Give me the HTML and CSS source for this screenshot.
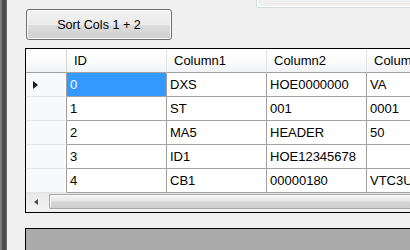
FILE: index.html
```html
<!DOCTYPE html>
<html lang="en">
<head>
  <meta charset="UTF-8">
  <title>Sort Cols</title>
  <link rel="stylesheet" href="styles.css">
</head>
<body>
  <div class="edge"></div>
  <div class="main">
    <div class="topbar">
      <div class="topbox"></div>
    </div>

    <button class="sort-btn">Sort Cols 1 + 2</button>

    <div class="grid">
      <div class="cells">
        <div class="hdr corner"></div>
        <div class="hdr">ID</div>
        <div class="hdr">Column1</div>
        <div class="hdr">Column2</div>
        <div class="hdr">Column3</div>

        <div class="rowhdr"><span class="cur"></span></div>
        <div class="cell sel">0</div>
        <div class="cell">DXS</div>
        <div class="cell">HOE0000000</div>
        <div class="cell">VA</div>

        <div class="rowhdr"></div>
        <div class="cell">1</div>
        <div class="cell">ST</div>
        <div class="cell">001</div>
        <div class="cell">0001</div>

        <div class="rowhdr"></div>
        <div class="cell">2</div>
        <div class="cell">MA5</div>
        <div class="cell">HEADER</div>
        <div class="cell">50</div>

        <div class="rowhdr"></div>
        <div class="cell">3</div>
        <div class="cell">ID1</div>
        <div class="cell">HOE12345678</div>
        <div class="cell"></div>

        <div class="rowhdr"></div>
        <div class="cell">4</div>
        <div class="cell">CB1</div>
        <div class="cell">00000180</div>
        <div class="cell">VTC3U</div>
      </div>

      <div class="hscroll">
        <div class="arrow-btn"><span class="arrow-left"></span></div>
        <div class="thumb"></div>
      </div>
    </div>

    <div class="panel"></div>
  </div>
</body>
</html>
```

FILE: styles.css
```css
* {
  margin: 0;
  padding: 0;
  box-sizing: border-box;
}

body {
  width: 410px;
  height: 250px;
  overflow: hidden;
  background-color: #f0f0f0;
  font-family: "Liberation Sans", Arial, sans-serif;
  display: flex;
}

/* dark frame on the left */
.edge {
  width: 7px;
  flex-shrink: 0;
  background: linear-gradient(to right, #7c7c7c 0 2px, #4c4c4c 2px 6px, #6a6a6a 6px 7px);
}

.main {
  flex: 1;
  padding-left: 18px;
  min-width: 0;
  overflow: hidden;
}

.topbar {
  height: 8px;
}

.topbox {
  margin-left: 231px;
  height: 8px;
  border-left: 1px solid #d3dbe3;
  border-bottom: 1px solid #d3dbe3;
  border-bottom-left-radius: 2px;
  box-shadow: inset 1px -1px 0 #ffffff;
}

.sort-btn {
  display: block;
  margin: 1px 0 0 1px;
  width: 146px;
  height: 31px;
  border: 1px solid #707070;
  border-radius: 3px;
  background: linear-gradient(#f2f2f2, #ebebeb 50%, #dddddd 51%, #cfcfcf);
  box-shadow: inset 0 0 0 1px #fbfbfb;
  font-family: "Liberation Sans", Arial, sans-serif;
  font-size: 12.6px;
  color: #000;
}

.grid {
  margin-top: 8px;
  border-top: 1px solid #000;
  border-left: 1px solid #000;
  border-bottom: 1px solid #000;
  padding-bottom: 2px;
  overflow: hidden;
}

.cells {
  display: grid;
  grid-template-columns: 41px repeat(3, 100px) 44px;
  grid-auto-rows: 24px;
  font-size: 13px;
}

.hdr {
  background: linear-gradient(#ffffff, #fbfbfc 55%, #f1f2f4);
  border-right: 1px solid #e2e3e6;
  border-bottom: 1px solid #a0a0a0;
  padding-left: 7px;
  display: flex;
  align-items: center;
  white-space: nowrap;
  overflow: hidden;
  color: #000;
}

.hdr.corner {
  border-right: 1px solid #d5d5d5;
}

.rowhdr {
  background-color: #f8f9fa;
  border-right: 1px solid #a0a0a0;
  border-bottom: 1px solid #e4e4e4;
  box-shadow: inset -2px 0 0 #ffffff;
  padding-left: 7px;
  display: flex;
  align-items: center;
}

.cur {
  width: 0;
  height: 0;
  border-left: 5px solid #1a1a1a;
  border-top: 4.5px solid transparent;
  border-bottom: 4.5px solid transparent;
}

.cell {
  background-color: #fff;
  border-right: 1px solid #a0a0a0;
  border-bottom: 1px solid #a0a0a0;
  padding-left: 3px;
  display: flex;
  align-items: center;
  white-space: nowrap;
  overflow: hidden;
  color: #000;
}

.cells > :nth-child(5n) {
  border-right: none;
}

.cell.sel {
  background-color: #3399ff;
  color: #fff;
}

.hscroll {
  display: flex;
  height: 17px;
  background: linear-gradient(#e9e9e9, #f2f2f2);
}

.arrow-btn {
  width: 23px;
  display: flex;
  align-items: center;
  padding-left: 8px;
}

.arrow-left {
  width: 0;
  height: 0;
  border-right: 4px solid #4d4d4d;
  border-top: 3.5px solid transparent;
  border-bottom: 3.5px solid transparent;
}

.thumb {
  flex: 1;
  margin: 1px 0;
  border: 1px solid #a7a7a7;
  border-right: none;
  border-radius: 2px 0 0 2px;
  background: linear-gradient(#f3f3f3, #e8e8e8 45%, #d6d6d6 55%, #cfcfcf);
  box-shadow: inset 1px 1px 0 #fafafa;
}

.panel {
  margin-top: 15px;
  height: 22px;
  border-top: 1px solid #000;
  border-left: 1px solid #000;
  background-color: #ababab;
}
```
